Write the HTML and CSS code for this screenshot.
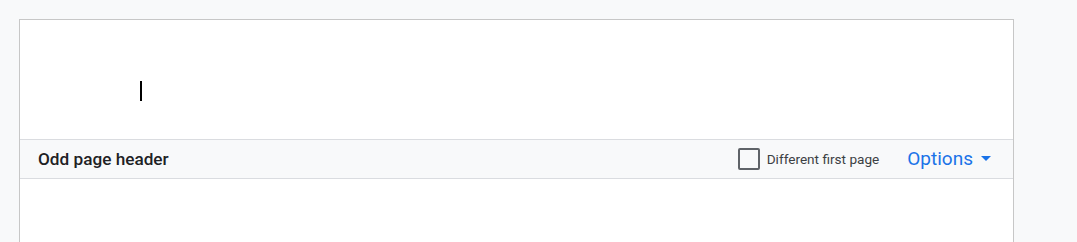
FILE: index.html
```html
<!DOCTYPE html>
<html lang="en">

<head>
    <meta charset="UTF-8">
    <title>Header</title>
    <link rel="stylesheet" href="styles.css">
</head>

<body>
    <div class="page">
        <div class="header-area">
            <span class="cursor"></span>
        </div>
        <div class="header-bar">
            <span class="bar-title">Odd page header</span>
            <label class="first-page">
                <span class="checkbox"></span>
                Different first page
            </label>
            <button class="options">Options
                <svg width="10" height="5" viewBox="0 0 10 5"><path d="M0 0h10L5 5z" fill="#1a73e8"/></svg>
            </button>
        </div>
        <div class="body-area"></div>
    </div>
</body>

</html>
```

FILE: styles.css
```css
body {
    margin: 0;
    padding: 19px 0 0 19px;
    background-color: #f8f9fa;
    font-family: Roboto, 'Noto Sans', sans-serif;
    width: 995px;
    height: 223px;
    overflow: hidden;
}

.page {
    background-color: #fff;
    border: 1px solid #c7c7c7;
    border-bottom: none;
    height: 300px;
}

.header-area {
    height: 120px;
    border-bottom: 1px solid #dadce0;
    padding: 61px 0 0 120px;
    box-sizing: border-box;
}

.cursor {
    display: block;
    width: 2px;
    height: 20px;
    background-color: #000;
}

.header-bar {
    height: 38px;
    background-color: #f8f9fa;
    border-bottom: 1px solid #dadce0;
    display: flex;
    align-items: center;
    padding: 0 22px 0 18px;
}

.bar-title {
    font-size: 17.2px;
    font-weight: 500;
    color: #202124;
    flex: 1;
    margin-bottom: 1px;
}

.first-page {
    display: flex;
    align-items: center;
    gap: 7px;
    font-size: 13.6px;
    color: #3c4043;
    margin-right: 28px;
    margin-bottom: 1px;
}

.checkbox {
    width: 18px;
    height: 18px;
    border: 2px solid #5f6368;
    border-radius: 2px;
}

.options {
    display: flex;
    align-items: center;
    gap: 8px;
    border: none;
    background: none;
    padding: 0;
    margin-bottom: 2px;
    font-family: inherit;
    font-size: 19px;
    color: #1a73e8;
}
```
